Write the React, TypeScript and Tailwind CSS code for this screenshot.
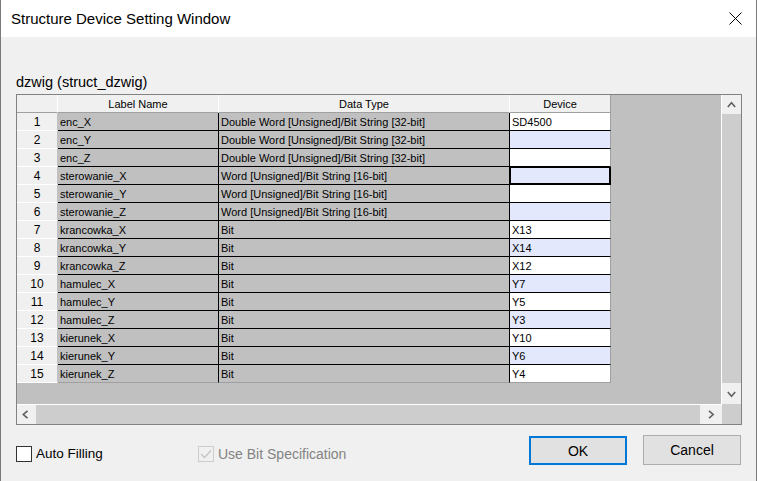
import React from 'react';

type Row = [string, string, string];

const dw = 'Double Word [Unsigned]/Bit String [32-bit]';
const w16 = 'Word [Unsigned]/Bit String [16-bit]';

const rows: Row[] = [
  ['enc_X', dw, 'SD4500'],
  ['enc_Y', dw, ''],
  ['enc_Z', dw, ''],
  ['sterowanie_X', w16, ''],
  ['sterowanie_Y', w16, ''],
  ['sterowanie_Z', w16, ''],
  ['krancowka_X', 'Bit', 'X13'],
  ['krancowka_Y', 'Bit', 'X14'],
  ['krancowka_Z', 'Bit', 'X12'],
  ['hamulec_X', 'Bit', 'Y7'],
  ['hamulec_Y', 'Bit', 'Y5'],
  ['hamulec_Z', 'Bit', 'Y3'],
  ['kierunek_X', 'Bit', 'Y10'],
  ['kierunek_Y', 'Bit', 'Y6'],
  ['kierunek_Z', 'Bit', 'Y4'],
];

const Chevron: React.FC<{ dir: 'up' | 'down' | 'left' | 'right' }> = ({ dir }) => {
  const pts = {
    up: '0.8,6 4.5,1.8 8.2,6',
    down: '0.8,1 4.5,5.2 8.2,1',
    left: '5.5,0.8 1.3,4.5 5.5,8.2',
    right: '1,0.8 5.2,4.5 1,8.2',
  }[dir];
  const vertical = dir === 'up' || dir === 'down';
  return (
    <svg width={vertical ? 9 : 7} height={vertical ? 7 : 9} viewBox={vertical ? '0 0 9 7' : '0 0 7 9'}>
      <polyline points={pts} fill="none" stroke="#606060" strokeWidth="1.6" />
    </svg>
  );
};

const GridRow: React.FC<{ row: Row; index: number }> = ({ row, index }) => {
  const last = index === rows.length - 1;
  const selected = index === 3;
  const lineB = last ? 'border-b-[#a0a0a0]' : 'border-b-black';
  const deviceBg = index % 2 === 0 ? 'bg-white' : 'bg-[#e3e8fc]';
  return (
    <div className="flex h-[18px] text-[11px] text-black">
      <div className="w-[41px] border-r border-b border-r-[#c0c0c0] border-b-white bg-[#f0f0f0] text-center text-[12px] pt-[1px] leading-[16px]">
        {index + 1}
      </div>
      <div className={`w-[161px] border-r border-b border-r-black ${lineB} pl-[2px] pt-[1px] leading-[16px] whitespace-nowrap`}>
        {row[0]}
      </div>
      <div className={`w-[291px] border-r border-b border-r-black ${lineB} pl-[2px] pt-[1px] leading-[16px] whitespace-nowrap`}>
        {row[1]}
      </div>
      <div
        className={`w-[101px] border-r border-b ${selected ? 'border-r-black shadow-[inset_0_0_0_1px_#000]' : 'border-r-[#a0a0a0]'} ${lineB} ${deviceBg} pl-[2px] pt-[1px] leading-[16px]`}
      >
        {row[2]}
      </div>
    </div>
  );
};

export default function App() {
  return (
    <div className="w-[757px] h-[481px] flex flex-col border-x border-[#7a7a7a] bg-[#f0f0f0] overflow-hidden font-['Liberation_Sans',Arial,sans-serif] text-black">
      {/* title bar */}
      <div className="h-[37px] shrink-0 bg-white flex items-center pl-[10px] pr-[14px] pt-[2px]">
        <span className="text-[15px]">Structure Device Setting Window</span>
        <svg className="ml-auto -mt-[2px]" width="13" height="13" viewBox="0 0 13 13">
          <path d="M0.5 0.5 L12.5 12.5 M12.5 0.5 L0.5 12.5" stroke="#000" strokeWidth="1" />
        </svg>
      </div>

      <div className="flex flex-col pl-[15px] pt-[35px]">
        <div className="h-[20px] leading-[20px] text-[14.5px]">dzwig (struct_dzwig)</div>

        {/* grid */}
        <div className="mt-[2px] w-[726px] h-[331px] border border-[#828282] flex flex-col">
          <div className="flex h-[310px]">
            <div className="w-[705px] h-[310px] bg-[#c0c0c0] border-r border-b border-white">
              <div className="flex h-[18px] text-[11px]">
                <div className="w-[41px] border-r border-b border-r-white border-b-[#a0a0a0] bg-[#f0f0f0]" />
                <div className="w-[161px] border-r border-b border-r-white border-b-[#a0a0a0] bg-[#f0f0f0] text-center pt-[1px] leading-[16px]">
                  Label Name
                </div>
                <div className="w-[291px] border-r border-b border-r-white border-b-[#a0a0a0] bg-[#f0f0f0] text-center pt-[1px] leading-[16px]">
                  Data Type
                </div>
                <div className="w-[101px] border-r border-b border-r-[#a0a0a0] border-b-[#a0a0a0] bg-[#f0f0f0] text-center pt-[1px] leading-[16px]">
                  Device
                </div>
              </div>
              {rows.map((r, i) => (
                <GridRow key={i} row={r} index={i} />
              ))}
            </div>
            <div className="w-[19px] h-[310px] flex flex-col bg-[#cdcdcd]">
              <div className="h-[19px] bg-[#f0f0f0] flex items-start justify-start pl-[5px] pt-[6px]">
                <Chevron dir="up" />
              </div>
              <div className="flex-1" />
              <div className="h-[21px] mb-[1px] bg-[#f0f0f0] flex items-start justify-start pl-[5px] pt-[8px]">
                <Chevron dir="down" />
              </div>
            </div>
          </div>
          <div className="flex h-[19px] bg-[#cdcdcd]">
            <div className="w-[19px] bg-[#f0f0f0] flex items-start pl-[5px] pt-[5px]">
              <Chevron dir="left" />
            </div>
            <div className="flex-1" />
            <div className="w-[22px] bg-[#f0f0f0] flex items-start pl-[8px] pt-[5px]">
              <Chevron dir="right" />
            </div>
            <div className="w-[19px]" />
          </div>
        </div>

        {/* bottom row */}
        <div className="mt-[10px] w-[725px] h-[30px] flex items-start text-[14px]">
          <div className="w-[182px] mt-[11px] flex items-center">
            <div className="w-[16px] h-[16px] border border-[#333333] bg-white" />
            <span className="ml-[4px] leading-[16px] text-[13.5px]">Auto Filling</span>
          </div>
          <div className="mt-[11px] flex items-center text-[#838383]">
            <div className="w-[16px] h-[16px] border border-[#cccccc] bg-[#f0f0f0] flex items-center justify-center">
              <svg width="12" height="10" viewBox="0 0 12 10">
                <polyline points="1,5 4.5,8.5 11,1.5" fill="none" stroke="#c4c4c4" strokeWidth="1.3" />
              </svg>
            </div>
            <span className="ml-[4px] leading-[16px]">Use Bit Specification</span>
          </div>
          <button className="ml-auto mt-[1px] w-[98px] h-[29px] border-2 border-[#0078d7] bg-[#e1e1e1] text-[14px] leading-none">
            OK
          </button>
          <button className="ml-[16px] w-[98px] h-[30px] border border-[#adadad] bg-[#e1e1e1] text-[14px] leading-none">
            Cancel
          </button>
        </div>
      </div>
    </div>
  );
}
